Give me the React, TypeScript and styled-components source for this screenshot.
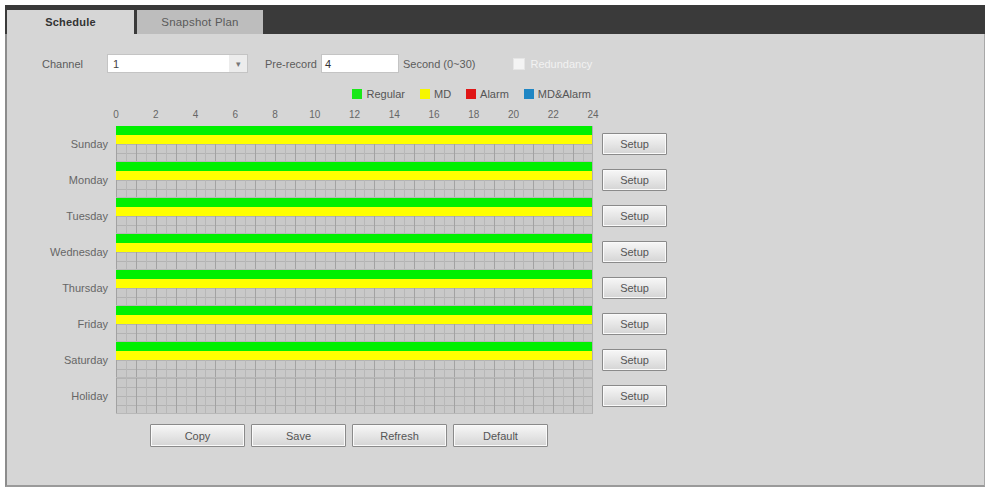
import React from 'react';
import styled, { createGlobalStyle } from 'styled-components';

const GlobalStyle = createGlobalStyle`
  html, body {
    margin: 0;
    padding: 0;
    background: #ffffff;
  }
  body {
    font-family: 'Liberation Sans', Arial, sans-serif;
    font-size: 11px;
    color: #555;
  }
`;

const HOUR_W = 477 / 24;

const days = ['Sunday', 'Monday', 'Tuesday', 'Wednesday', 'Thursday', 'Friday', 'Saturday', 'Holiday'];
const hours = [0, 2, 4, 6, 8, 10, 12, 14, 16, 18, 20, 22, 24];
const legend = [
  { label: 'Regular', color: '#18e818' },
  { label: 'MD', color: '#f6f600' },
  { label: 'Alarm', color: '#e01616' },
  { label: 'MD&Alarm', color: '#1f86c4' },
];

const App = () => {
  return (
    <>
      <GlobalStyle />
      <Panel>
        <TabBar>
          <Tab active>Schedule</Tab>
          <Tab>Snapshot Plan</Tab>
        </TabBar>
        <Body>
          <FormRow>
            <FieldLabel width={65}>Channel</FieldLabel>
            <Select>
              <span>1</span>
              <Arrow>▾</Arrow>
            </Select>
            <FieldLabel style={{ marginLeft: 17 }}>Pre-record</FieldLabel>
            <TextInput>4</TextInput>
            <FieldLabel>Second (0~30)</FieldLabel>
            <Check>
              <Box />
              <span>Redundancy</span>
            </Check>
          </FormRow>

          <Legend>
            {legend.map((l) => (
              <LegendItem key={l.label}>
                <Swatch color={l.color} />
                {l.label}
              </LegendItem>
            ))}
          </Legend>

          <Ruler>
            {hours.map((h) => (
              <Tick key={h}>{h}</Tick>
            ))}
          </Ruler>

          <Schedule>
            {days.map((d) => (
              <DayRow key={d}>
                <DayLabel>{d}</DayLabel>
                <Track>
                  {d !== 'Holiday' && (
                    <>
                      <Bar color="#00f000" />
                      <Bar color="#ffff00" />
                    </>
                  )}
                </Track>
                <Button width={65} height={22}>Setup</Button>
              </DayRow>
            ))}
          </Schedule>

          <Actions>
            <Button width={95} height={23}>Copy</Button>
            <Button width={95} height={23}>Save</Button>
            <Button width={95} height={23}>Refresh</Button>
            <Button width={95} height={23}>Default</Button>
          </Actions>
        </Body>
      </Panel>
    </>
  );
};

const Panel = styled.div`
  margin: 5px 0 0 5px;
  width: 980px;
  height: 482px;
  display: flex;
  flex-direction: column;
`;

const TabBar = styled.div`
  height: 29px;
  background: #3a3a3a;
  display: flex;
  align-items: flex-end;
  gap: 3px;
  padding-left: 2px;
  box-sizing: border-box;
`;

const Tab = styled.div<{ active?: boolean }>`
  width: ${(p) => (p.active ? 127 : 126)}px;
  height: 24px;
  display: flex;
  align-items: center;
  justify-content: center;
  background: ${(p) => (p.active ? '#d6d6d6' : '#bdbdbd')};
  color: ${(p) => (p.active ? '#333' : '#5a5a5a')};
  font-weight: ${(p) => (p.active ? 700 : 400)};
  font-size: ${(p) => (p.active ? 11 : 11.5)}px;
  letter-spacing: 0.2px;
`;

const Body = styled.div`
  flex: 1;
  background: #d6d6d6;
  border-left: 2px solid #8c8c8c;
  border-right: 1px solid #a8a8a8;
  border-bottom: 2px solid #9a9a9a;
  padding: 20px 0 0 35px;
  box-sizing: border-box;
`;

const FormRow = styled.div`
  display: flex;
  align-items: center;
  height: 19px;
`;

const FieldLabel = styled.span<{ width?: number }>`
  width: ${(p) => (p.width ? `${p.width}px` : 'auto')};
  margin-right: ${(p) => (p.width ? 0 : 4)}px;
  color: #5c5c5c;
  white-space: nowrap;
`;

const Select = styled.div`
  width: 141px;
  height: 19px;
  box-sizing: border-box;
  background: #fff;
  border: 1px solid #c4c4c4;
  display: flex;
  align-items: center;
  justify-content: space-between;
  padding-left: 5px;
  color: #444;
`;

const Arrow = styled.span`
  width: 18px;
  height: 100%;
  display: flex;
  align-items: center;
  justify-content: center;
  background: #ececec;
  color: #777;
  font-size: 9px;
`;

const TextInput = styled.div`
  width: 78px;
  height: 19px;
  box-sizing: border-box;
  background: #fff;
  border: 1px solid #c4c4c4;
  padding-left: 3px;
  display: flex;
  align-items: center;
  color: #333;
  margin-right: 4px;
`;

const Check = styled.label`
  display: flex;
  align-items: center;
  gap: 5px;
  margin-left: 34px;
  color: #f2f2f2;
`;

const Box = styled.span`
  width: 10px;
  height: 10px;
  background: #f4f4f4;
  border: 1px solid #e6e6e6;
`;

const Legend = styled.div`
  margin-top: 15px;
  width: 549px;
  height: 12px;
  display: flex;
  justify-content: flex-end;
  gap: 15px;
`;

const LegendItem = styled.span`
  display: flex;
  align-items: center;
  gap: 4px;
  color: #555;
`;

const Swatch = styled.span<{ color: string }>`
  width: 10px;
  height: 10px;
  background: ${(p) => p.color};
`;

const Ruler = styled.div`
  margin: 9px 0 0 66px;
  width: ${477 + 16}px;
  height: 12px;
  display: flex;
  justify-content: space-between;
`;

const Tick = styled.span`
  width: 16px;
  text-align: center;
  font-size: 10px;
  color: #666;
`;

const Schedule = styled.div`
  margin-top: 5px;
  display: flex;
  flex-direction: column;
`;

const DayRow = styled.div`
  display: flex;
  align-items: center;
  height: 36px;
`;

const DayLabel = styled.span`
  width: 66px;
  margin-right: 8px;
  text-align: right;
  color: #666;
  white-space: nowrap;
`;

const Track = styled.div`
  width: 477px;
  height: 36px;
  box-sizing: border-box;
  display: flex;
  flex-direction: column;
  background-color: #c9c9c9;
  background-image:
    repeating-linear-gradient(to right, #a2a2a2 0 1px, transparent 1px ${HOUR_W}px),
    repeating-linear-gradient(to right, #b8b8b8 0 1px, transparent 1px ${HOUR_W / 2}px),
    repeating-linear-gradient(to bottom, #b3b3b3 0 1px, transparent 1px 9px);
  border-right: 1px solid #b0b0b0;
  border-bottom: 1px solid #b8b8b8;
`;

const Bar = styled.div<{ color: string }>`
  height: 9px;
  flex-shrink: 0;
  background: ${(p) => p.color};
`;

const Button = styled.button<{ width: number; height: number }>`
  width: ${(p) => p.width}px;
  height: ${(p) => p.height}px;
  margin-left: 9px;
  padding: 0;
  font-family: 'Liberation Sans', Arial, sans-serif;
  font-size: 11px;
  color: #555;
  background: linear-gradient(#f7f7f7, #e6e6e6 50%, #d4d4d4);
  border: 1px solid #8a8a8a;
  border-radius: 1px;
  box-shadow: inset 0 0 0 1px #fafafa;
  cursor: pointer;
`;

const Actions = styled.div`
  margin: 10px 0 0 108px;
  display: flex;
  gap: 6px;
  ${Button} {
    margin-left: 0;
  }
`;

export default App;
